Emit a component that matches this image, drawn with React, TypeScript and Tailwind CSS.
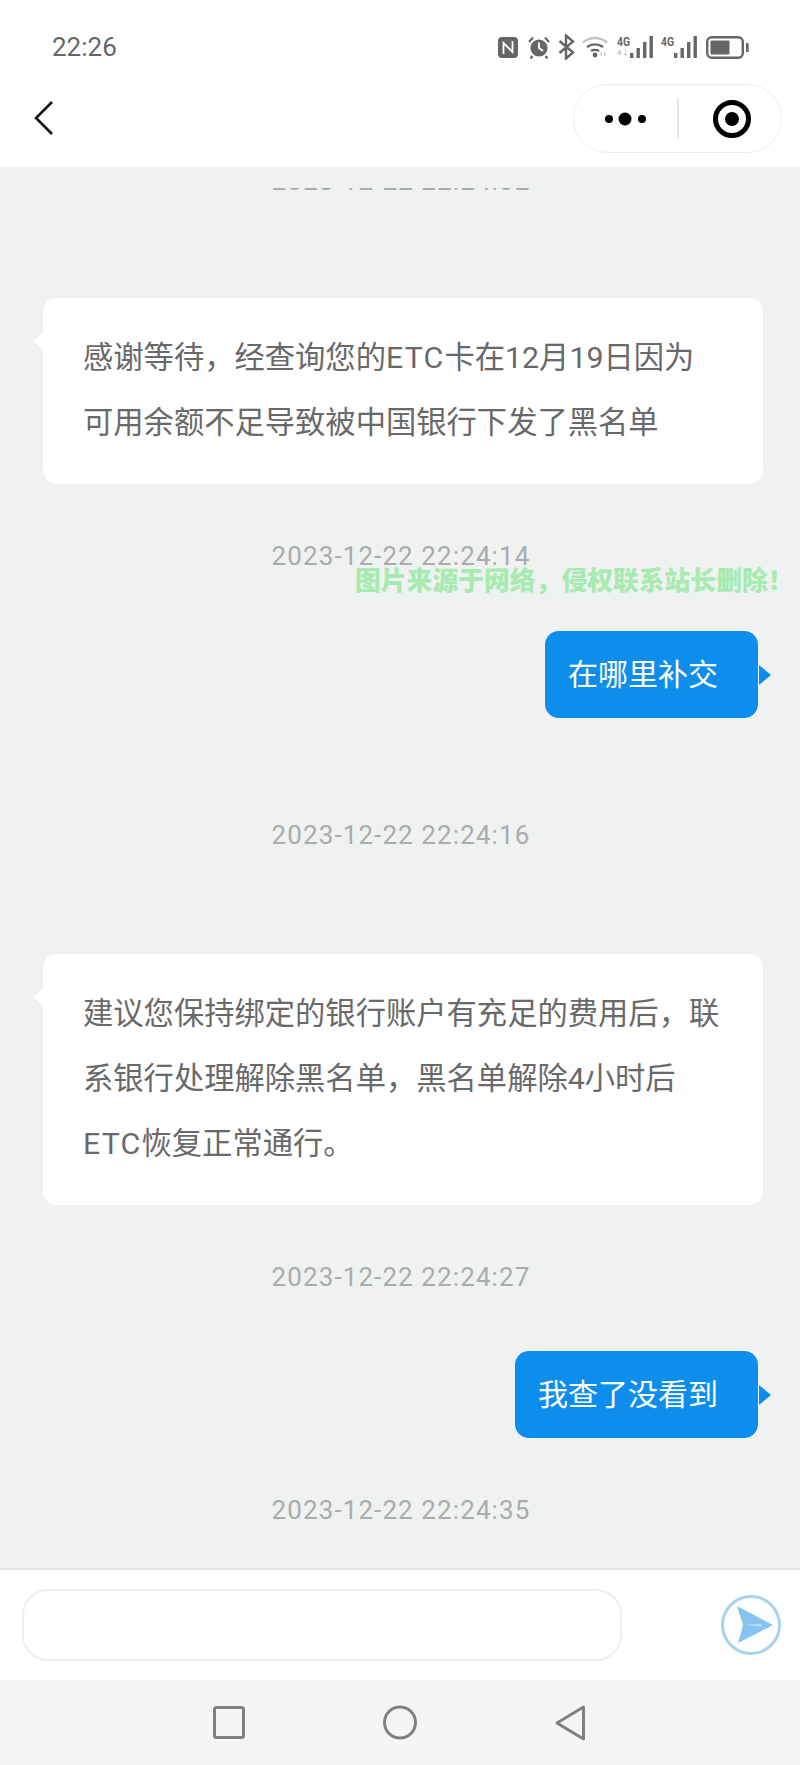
import React from 'react'

const FONT = "font-['Roboto','Noto_Sans_CJK_SC',sans-serif]"

const Stamp = ({ text, className }: { text: string; className: string }) => (
  <div className={`h-[36px] pl-[2px] flex items-center justify-center text-[26px] tracking-[1.1px] text-[#a8acaf] ${className}`}>
    {text}
  </div>
)

const Incoming = ({ children, className }: { children: React.ReactNode; className: string }) => (
  <div className={`relative w-[720px] ml-[43px] bg-white rounded-[14px] pl-[40px] pr-[42px] pt-[27px] pb-[29px] ${className}`}>
    <div className="absolute left-[-6px] top-[36px] w-[14px] h-[14px] bg-white rotate-45" />
    <p className="relative text-[30.3px] leading-[65px] text-[#696969]">{children}</p>
  </div>
)

const Outgoing = ({ text, className }: { text: string; className: string }) => (
  <div className={`relative self-end mr-[42px] h-[87px] flex items-center pl-[23px] pr-[40px] bg-[#0d8eec] rounded-[14px] ${className}`}>
    <span className="text-[30px] text-white">{text}</span>
    <svg className="absolute left-full top-1/2 -translate-y-1/2 ml-[1px]" width="12" height="20" viewBox="0 0 12 20">
      <path d="M0 0 L12 10 L0 20 Z" fill="#0d8eec" />
    </svg>
  </div>
)

const Bars = () => (
  <svg width="24" height="23" viewBox="0 0 24 23" fill="#666666">
    <rect x="0" y="17" width="3.4" height="5" />
    <rect x="6.5" y="12" width="3.4" height="10" />
    <rect x="13" y="6" width="3.4" height="16" />
    <rect x="19.5" y="0" width="3.4" height="22" />
  </svg>
)

const StatusIcons = () => (
  <div className="flex items-center">
    {/* nfc */}
    <svg width="20" height="21" viewBox="0 0 20 21">
      <rect x="0" y="0" width="20" height="21" rx="4" fill="#666666" />
      <path d="M5.5 17 V6 L14.5 15 V4" fill="none" stroke="#fff" strokeWidth="1.8" />
    </svg>
    {/* alarm */}
    <svg className="ml-[10px]" width="22" height="23" viewBox="0 0 22 23">
      <circle cx="11" cy="12" r="8.6" fill="#666666" />
      <path d="M11 6.5 V12 L15 15" fill="none" stroke="#fff" strokeWidth="1.8" />
      <path d="M1 6 L5 1.5 M21 6 L17 1.5 M4.5 20 L2.5 22.5 M17.5 20 L19.5 22.5" stroke="#666666" strokeWidth="2.2" />
    </svg>
    {/* bluetooth */}
    <svg className="ml-[8px]" width="17" height="26" viewBox="0 0 17 26">
      <path d="M1.5 7 L15 18.5 L8 24.5 V1.5 L15 7.5 L1.5 19" fill="none" stroke="#666666" strokeWidth="2.4" />
    </svg>
    {/* wifi */}
    <svg className="ml-[7px]" width="26" height="22" viewBox="0 0 26 22">
      <path d="M1 6.5 C8 0.5 18 0.5 25 6.5" fill="none" stroke="#c4c4c4" strokeWidth="2.4" />
      <path d="M5 11 C9.5 7.5 16.5 7.5 21 11" fill="none" stroke="#666666" strokeWidth="2.4" />
      <path d="M9 15 C11 13.5 15 13.5 17 15" fill="none" stroke="#666666" strokeWidth="2.4" />
      <circle cx="13" cy="19" r="2.4" fill="#666666" />
      <path d="M18 18 L20 15.5 V21 Z M22 15.5 L24 18 L22 21 Z" fill="#c4c4c4" />
    </svg>
    <div className="ml-[9px] flex flex-col w-[13px] h-[22px]">
      <span className="text-[13px] leading-[12px] font-bold text-[#666666] scale-x-[0.8] origin-left whitespace-nowrap">4G</span>
      <span className="text-[8px] leading-[9px] text-[#c8c8c8] font-bold whitespace-nowrap">4↓</span>
    </div>
    <Bars />
    <span className="ml-[7px] -mt-[10px] w-[13px] text-[13px] leading-[12px] font-bold text-[#666666] scale-x-[0.8] origin-left whitespace-nowrap">4G</span>
    <Bars />
    <svg className="ml-[8px]" width="43" height="23" viewBox="0 0 43 23">
      <rect x="1.2" y="1.2" width="35.6" height="20.6" rx="4.5" fill="none" stroke="#666666" strokeWidth="2.4" />
      <rect x="4.5" y="4.5" width="19" height="14" rx="1" fill="#666666" />
      <rect x="40" y="7" width="2.6" height="9" fill="#666666" />
    </svg>
  </div>
)

export default function App() {
  return (
    <div className={`relative w-[800px] h-[1765px] flex flex-col bg-white overflow-hidden ${FONT}`}>
      {/* status bar */}
      <div className="h-[75px] pt-[19px] pl-[52px] pr-[51px] flex items-start justify-between">
        <div className="h-[56px] flex items-center text-[26px] text-[#666666]">22:26</div>
        <div className="h-[56px] flex items-center">
          <StatusIcons />
        </div>
      </div>

      {/* title bar */}
      <div className="h-[92px] pt-[9px] pl-[34px] pr-[18px] flex items-start justify-between">
        <svg className="mt-[17px]" width="20" height="34" viewBox="0 0 20 34">
          <path d="M18 1 L2 17 L18 33" fill="none" stroke="#111111" strokeWidth="2.6" />
        </svg>
        <div className="w-[209px] h-[69px] rounded-full border border-[#ececec] flex items-center">
          <svg className="ml-[28px]" width="44" height="14" viewBox="0 0 44 14" fill="#000000">
            <circle cx="7" cy="7" r="4" />
            <circle cx="23" cy="7" r="6.5" />
            <circle cx="40" cy="7" r="4" />
          </svg>
          <div className="ml-[31px] w-[2px] h-[41px] bg-[#e6e6e6]" />
          <svg className="ml-[33px]" width="40" height="40" viewBox="0 0 40 40">
            <circle cx="20" cy="20" r="16.5" fill="none" stroke="#000000" strokeWidth="5" />
            <circle cx="20" cy="20" r="7" fill="#000000" />
          </svg>
        </div>
      </div>

      {/* messages */}
      <div className="flex-1 min-h-0 flex flex-col bg-[#f0f2f2] overflow-hidden">
        <div className="mt-[21px] h-[2px] pl-[2px] overflow-hidden flex items-end justify-center text-[26px] tracking-[1.1px] text-[#a8acaf]">
          <span className="leading-[30px] -mb-[6px]">2023-12-22 22:24:02</span>
        </div>
        <Incoming className="mt-[108px]">
          感谢等待，经查询您的<span className="tracking-[1.2px]">ETC</span>卡在12月19日因为可用余额不足导致被中国银行下发了黑名单
        </Incoming>
        <Stamp className="mt-[54px]" text="2023-12-22 22:24:14" />
        <Outgoing className="mt-[57px]" text="在哪里补交" />
        <Stamp className="mt-[99px]" text="2023-12-22 22:24:16" />
        <Incoming className="mt-[101px]">
          建议您保持绑定的银行账户有充足的费用后，联系银行处理解除黑名单，黑名单解除4小时后<span className="tracking-[1.2px]">ETC</span>恢复正常通行。
        </Incoming>
        <Stamp className="mt-[54px]" text="2023-12-22 22:24:27" />
        <Outgoing className="mt-[56px]" text="我查了没看到" />
        <Stamp className="mt-[54px]" text="2023-12-22 22:24:35" />
      </div>

      {/* input bar */}
      <div className="h-[112px] border-t-2 border-[#e2e4e4] bg-white flex items-center pl-[22px]">
        <div className="w-[600px] h-[72px] rounded-[26px] border-2 border-[#eeeeee]" />
        <svg className="ml-[98px]" width="62" height="62" viewBox="0 0 62 62">
          <circle cx="31" cy="31" r="28.5" fill="#ffffff" stroke="#a8d3ee" strokeWidth="3" />
          <path d="M17 12 L53 31 L18 49 L23 31 Z" fill="#85c4f0" />
          <path d="M23 31 L42 29.5 L42 32.5 Z" fill="#b5dbf5" />
        </svg>
      </div>

      {/* system nav */}
      <div className="h-[85px] bg-[#f4f6f6] flex items-center pl-[213px] gap-[138px]">
        <svg width="32" height="33" viewBox="0 0 32 33">
          <rect x="1.5" y="1.5" width="29" height="30" rx="2" fill="none" stroke="#808080" strokeWidth="3" />
        </svg>
        <svg width="34" height="35" viewBox="0 0 34 35">
          <circle cx="17" cy="17.5" r="15.5" fill="none" stroke="#808080" strokeWidth="3" />
        </svg>
        <svg width="30" height="36" viewBox="0 0 30 36">
          <path d="M28.5 2 L2 18 L28.5 34 Z" fill="none" stroke="#808080" strokeWidth="3" strokeLinejoin="round" />
        </svg>
      </div>

      {/* watermark */}
      <div className="absolute left-[355px] top-[563px] text-[25.8px] leading-[32px] font-black whitespace-nowrap text-[#a8ebb0] [text-spacing-trim:space-all] font-['Noto_Sans_CJK_SC',sans-serif]">
        图片来源于网络，侵权联系站长删除！
      </div>
    </div>
  )
}
